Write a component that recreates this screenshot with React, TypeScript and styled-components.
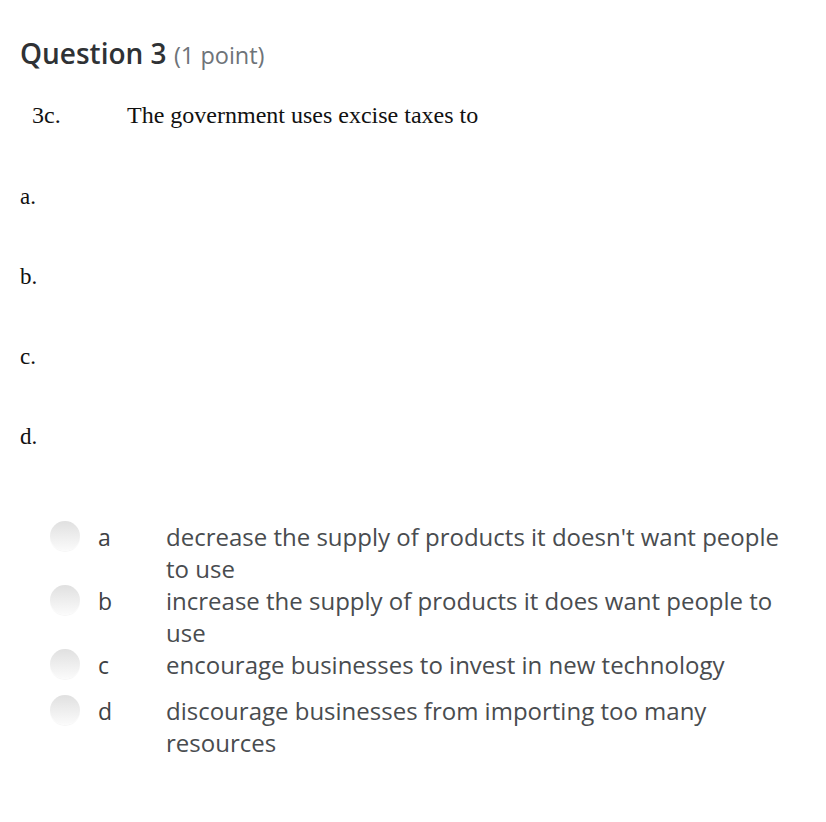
import * as React from 'react';
import styled, { createGlobalStyle } from 'styled-components';

const GlobalStyle = createGlobalStyle`
  html, body {
    margin: 0;
    padding: 0;
    background: #fff;
  }
`;

const Page = styled.div`
  width: 826px;
  min-height: 822px;
  box-sizing: border-box;
  padding: 34px 20px 0 20px;
  background: #fff;
`;

const Heading = styled.h2`
  margin: 0;
  font-family: "Open Sans", sans-serif;
  font-weight: 600;
  font-size: 28px;
  line-height: 38px;
  color: #2f3235;
`;

const Points = styled.span`
  font-weight: 400;
  font-size: 23.5px;
  color: #6e7378;
`;

const Stem = styled.div`
  display: flex;
  margin: 28px 0 0 12px;
  font-family: "Liberation Serif", serif;
  font-size: 24px;
  line-height: 26px;
  color: #111;
`;

const StemNumber = styled.span`
  width: 95px;
`;

const LetterList = styled.div`
  display: flex;
  flex-direction: column;
  gap: 54px;
  margin-top: 56px;
  font-family: "Liberation Serif", serif;
  font-size: 23px;
  line-height: 26px;
  color: #111;
`;

const Choices = styled.div`
  display: flex;
  flex-direction: column;
  margin: 71px 0 0 30px;
`;

const Choice = styled.label`
  display: flex;
  align-items: flex-start;
  min-height: 46px;
  font-family: "Open Sans", sans-serif;
  font-size: 24px;
  line-height: 32px;
  color: #494c4f;
`;

const Radio = styled.span`
  flex: none;
  width: 30px;
  height: 30px;
  margin-top: 0;
  border-radius: 50%;
  background: linear-gradient(180deg, #e0e0e0 0%, #efefef 55%, #fbfbfb 100%);
  box-shadow: 0 1px 1px rgba(0, 0, 0, 0.04);
`;

const Letter = styled.span`
  flex: none;
  width: 86px;
  padding-left: 18px;
  box-sizing: border-box;
  font-size: 23px;
  color: #3e4144;
`;

const ChoiceText = styled.span`
  width: 630px;
`;

const options = [
  { key: 'a', text: "decrease the supply of products it doesn't want people to use" },
  { key: 'b', text: 'increase the supply of products it does want people to use' },
  { key: 'c', text: 'encourage businesses to invest in new technology' },
  { key: 'd', text: 'discourage businesses from importing too many resources' },
];

const App = (): JSX.Element => {
  return (
    <>
      <GlobalStyle />
      <Page>
        <Heading>
          Question 3 <Points>(1 point)</Points>
        </Heading>
        <Stem>
          <StemNumber>3c.</StemNumber>
          <span>The government uses excise taxes to</span>
        </Stem>
        <LetterList>
          <span>a.</span>
          <span>b.</span>
          <span>c.</span>
          <span>d.</span>
        </LetterList>
        <Choices>
          {options.map((o) => (
            <Choice key={o.key}>
              <Radio />
              <Letter>{o.key}</Letter>
              <ChoiceText>{o.text}</ChoiceText>
            </Choice>
          ))}
        </Choices>
      </Page>
    </>
  );
};

export default App;
